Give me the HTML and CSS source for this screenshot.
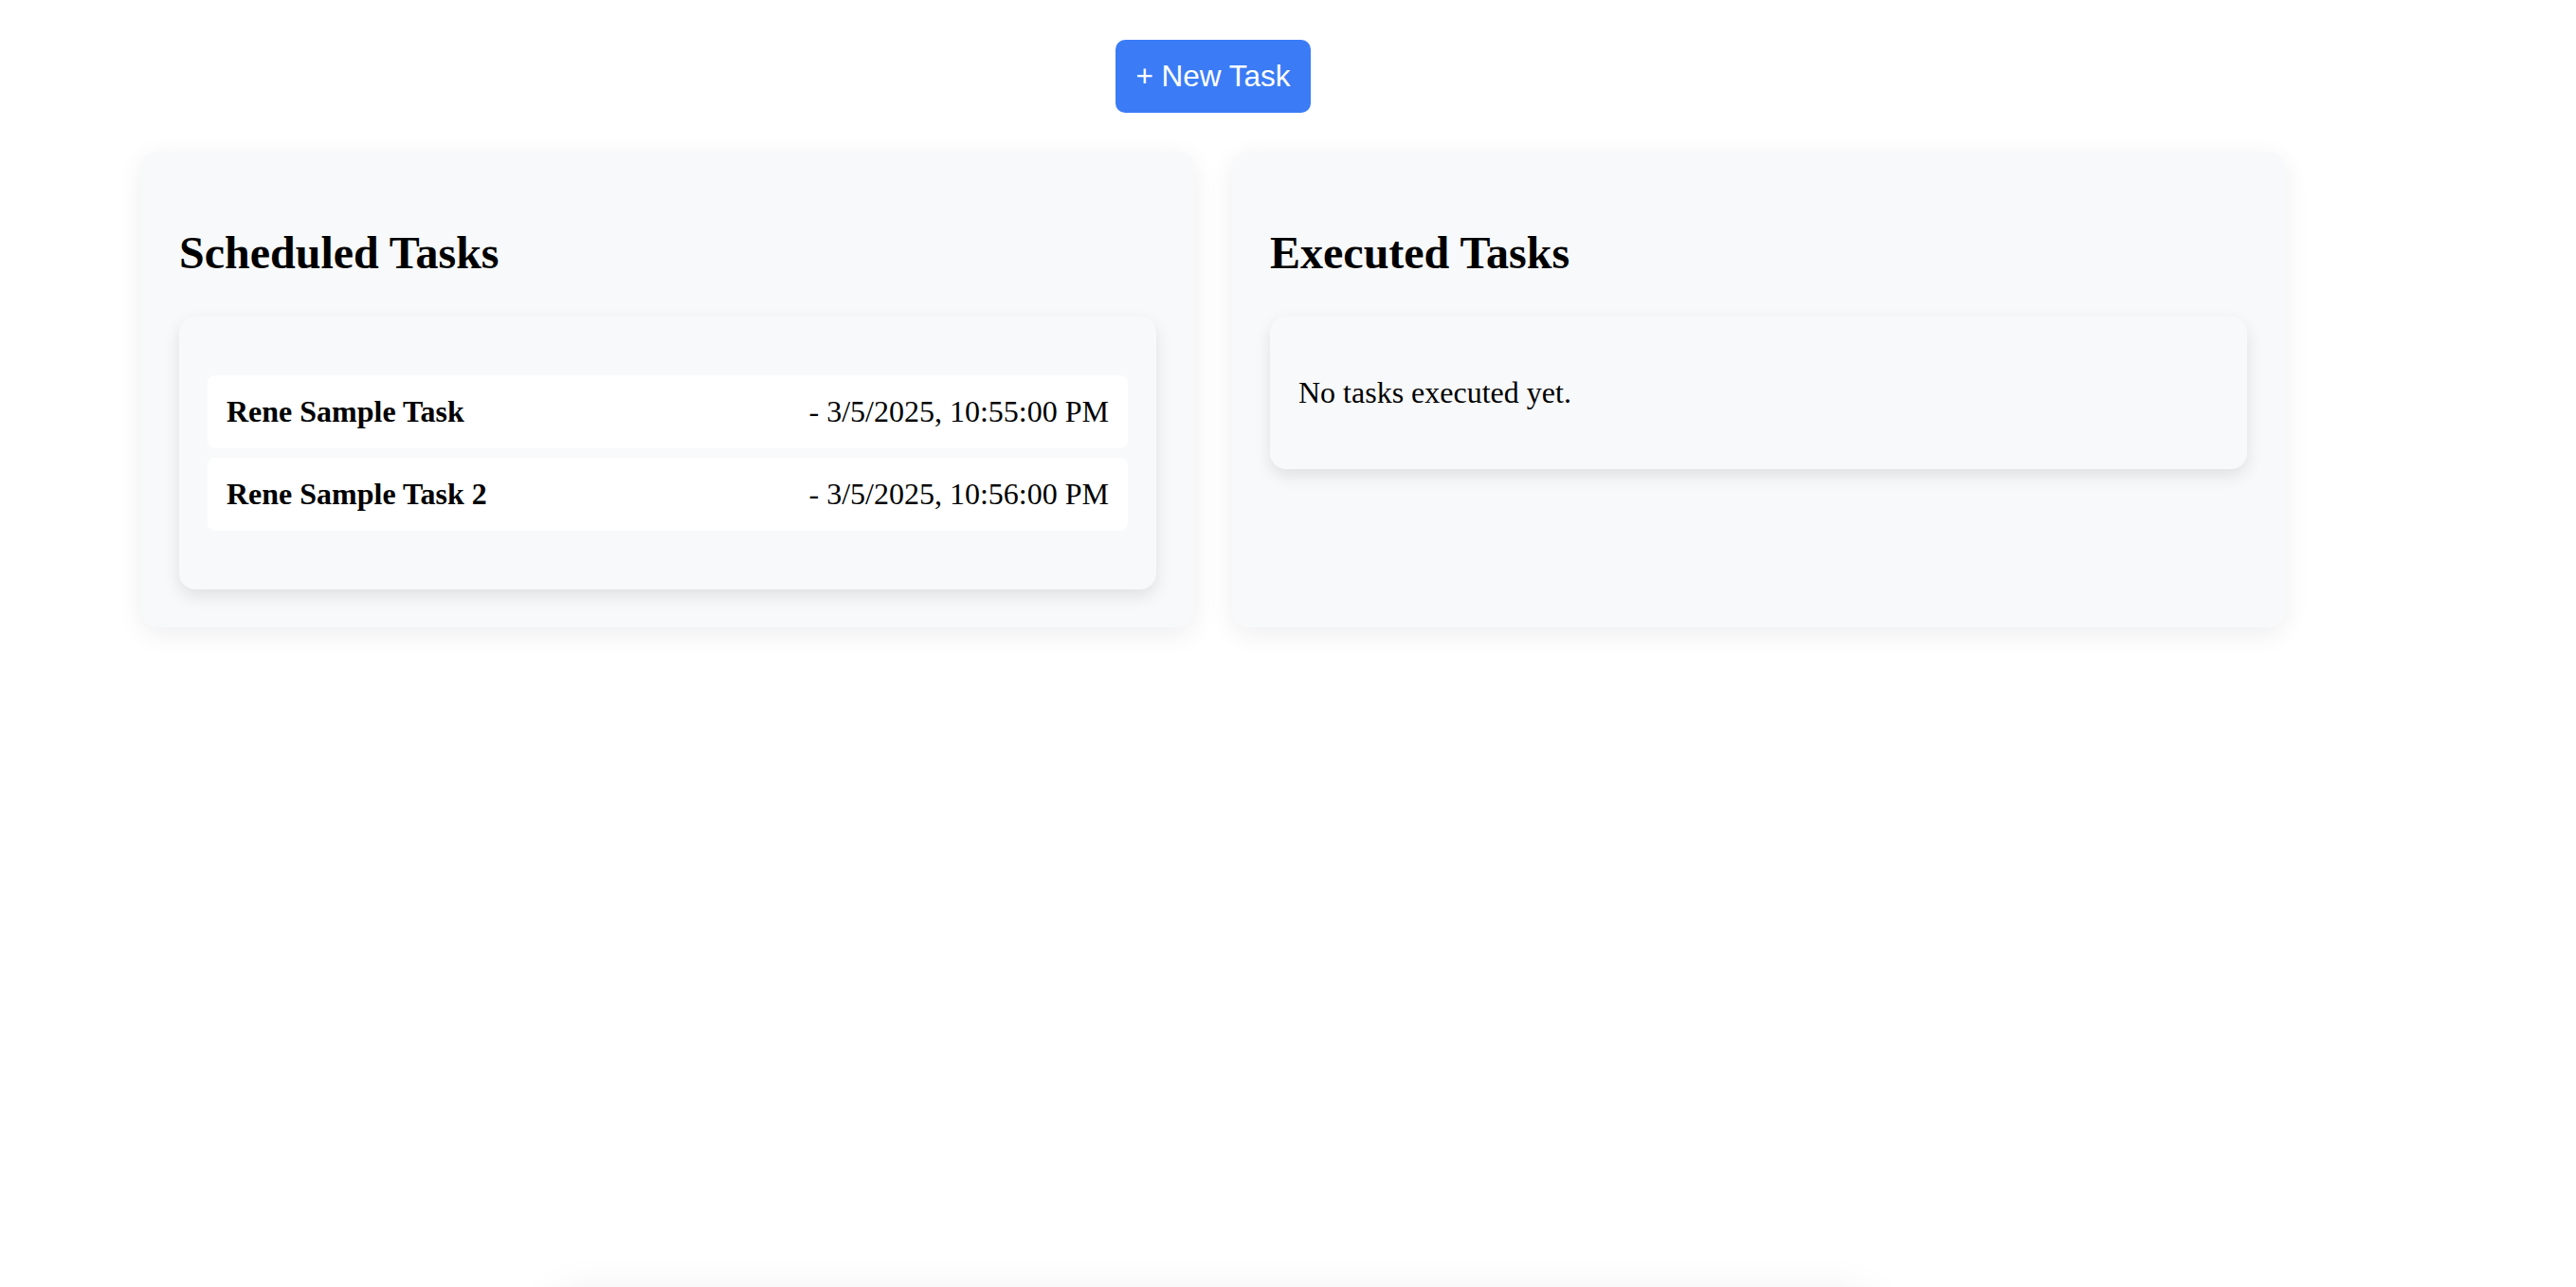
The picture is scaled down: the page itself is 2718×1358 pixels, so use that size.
FILE: index.html
```html
<!DOCTYPE html>
<html lang="en">
<head>
<meta charset="utf-8">
<title>Tasks</title>
<link rel="stylesheet" href="styles.css">
</head>
<body>
<div class="page">
  <div class="toolbar">
    <button class="new-btn" type="button">+ New Task</button>
  </div>
  <div class="columns">
    <section class="panel">
      <h2 class="panel-title">Scheduled Tasks</h2>
      <div class="box">
        <ul class="task-list">
          <li class="task"><strong>Rene Sample Task</strong><span>- 3/5/2025, 10:55:00 PM</span></li>
          <li class="task"><strong>Rene Sample Task 2</strong><span>- 3/5/2025, 10:56:00 PM</span></li>
        </ul>
      </div>
    </section>
    <section class="panel">
      <h2 class="panel-title">Executed Tasks</h2>
      <div class="box">
        <p class="empty">No tasks executed yet.</p>
      </div>
    </section>
  </div>
  <div class="below"></div>
</div>
</body>
</html>
```
FILE: styles.css
```css
html, body {
  margin: 0;
  padding: 0;
  background: #ffffff;
}
body {
  font-family: "Liberation Serif", "Times New Roman", serif;
  font-size: 32px;
  color: #000;
  overflow: hidden;
}
.page {
  width: 2262px;
  margin-left: 149px;
}
.toolbar {
  display: flex;
  justify-content: center;
  padding-top: 42px;
}
.new-btn {
  font-family: "Liberation Sans", Arial, sans-serif;
  font-size: 31.5px;
  color: #ffffff;
  background: #3b7cf6;
  border: none;
  border-radius: 10px;
  width: 206px;
  height: 77px;
  padding: 0;
  line-height: 77px;
  text-align: center;
}
.columns {
  display: grid;
  grid-template-columns: 1111px 1111px;
  gap: 40px;
  margin-top: 41px;
}
.panel {
  background: #f8f9fa;
  border-radius: 17px;
  padding: 40px;
  box-shadow: 0 7px 28px rgba(0, 0, 0, 0.07);
}
.panel-title {
  font-size: 48px;
  line-height: 52px;
  font-weight: bold;
  margin: 41px 0 41px;
}
.box {
  background: #f8f9fa;
  border-radius: 17px;
  padding: 30px;
  box-shadow: 0 7px 17px rgba(0, 0, 0, 0.1);
}
.task-list {
  list-style: none;
  margin: 32px 0;
  padding: 0;
  display: flex;
  flex-direction: column;
  gap: 10px;
}
.task {
  display: flex;
  justify-content: space-between;
  align-items: center;
  height: 77px;
  padding: 0 20px;
  background: #ffffff;
  border-radius: 8px;
}
.empty {
  margin: 31px 0;
  line-height: 39px;
}
.below {
  width: 1386px;
  height: 400px;
  margin: 703px auto 0;
  background: #ffffff;
  border-radius: 17px;
  box-shadow: 0 7px 50px rgba(0, 0, 0, 0.1);
}
```
